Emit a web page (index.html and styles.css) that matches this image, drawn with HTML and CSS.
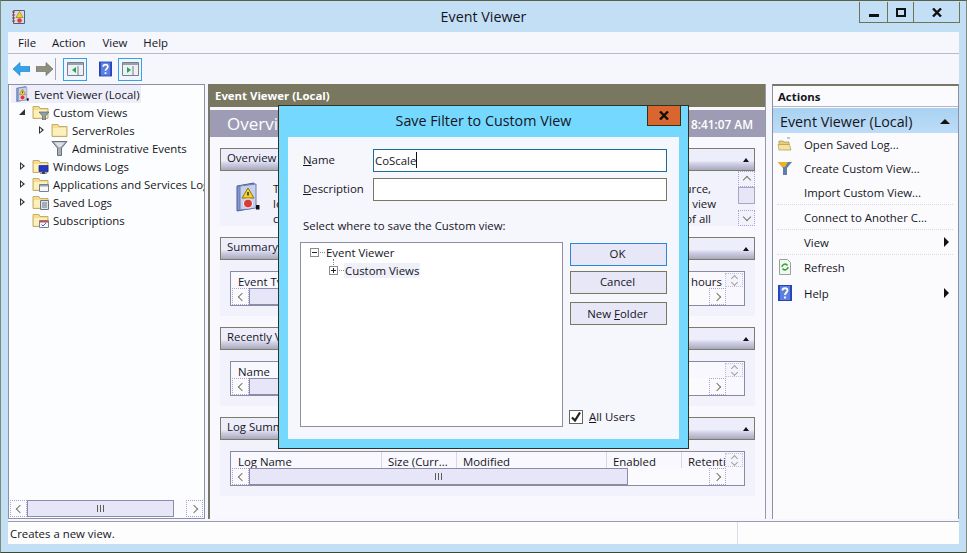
FILE: index.html
```html
<!DOCTYPE html>
<html lang="en">
<head>
    <meta charset="UTF-8">
    <meta name="viewport" content="width=device-width, initial-scale=1.0">
    <title>Event Viewer</title>
    <link rel="stylesheet" href="styles.css">
</head>
<body>
    <svg class="defs" width="0" height="0">
        <symbol id="folder" viewBox="0 0 17 16">
            <path d="M1 2.500h6l1 2h8v10H1z" fill="#f6dc8c" stroke="#c2ae72"/>
            <path d="M2 6h13v7.500H2z" fill="#fcf0bc"/>
        </symbol>
        <symbol id="folder-filter" viewBox="0 0 17 16">
            <use href="#folder" width="17" height="16"/>
            <path d="M7 8h10l-3.500 4v4h-3v-4z" fill="#8fa0ad" stroke="#56646f" stroke-width=".7"/>
        </symbol>
        <symbol id="folder-logs" viewBox="0 0 17 16">
            <use href="#folder" width="17" height="16"/>
            <path d="M7 7.500h9v6H7z" fill="#2438c8" stroke="#1a2478" stroke-width=".7"/>
            <path d="M10 14h3v1.500h2V16H8v-.5h2z" fill="#34406a"/>
        </symbol>
        <symbol id="folder-apps" viewBox="0 0 17 16">
            <use href="#folder" width="17" height="16"/>
            <path d="M7.500 8.500h9v7h-9z" fill="#f4f6fa" stroke="#78808e"/>
            <path d="M8 9h8v1.500H8z" fill="#9aa6b8"/>
        </symbol>
        <symbol id="folder-saved" viewBox="0 0 17 16">
            <use href="#folder" width="17" height="16"/>
            <path d="M8.500 6.500h8v9h-8z" fill="#dde3ea" stroke="#6a7684"/>
            <path d="M10 9h5M10 11h5M10 13h5" stroke="#6a7684"/>
        </symbol>
        <symbol id="folder-subs" viewBox="0 0 17 16">
            <use href="#folder" width="17" height="16"/>
            <path d="M7.500 8.500h9v7h-9z" fill="#f6f8fc" stroke="#7a8290"/>
            <path d="M8 9h8v1.500H8z" fill="#d8483c"/>
            <path d="M9.500 12.500l1.500 1.500 3-3" fill="none" stroke="#3a62c8"/>
        </symbol>
        <symbol id="funnel" viewBox="0 0 17 16">
            <path d="M1 1.500h15L10.500 8v7.500h-4V8z" fill="#a9b0b8" stroke="#69727c"/>
            <path d="M3.500 2.500h10L9.500 7h-2z" fill="#dfe3e8"/>
        </symbol>
        <symbol id="evlog" viewBox="0 0 26 30">
            <path d="M3 4 20 1v25L3 29z" fill="#7f96cf" stroke="#4c5f95"/>
            <path d="M6 4 22 2v24L6 28z" fill="#c5d2ee" stroke="#6c7db0"/>
            <path d="M14 6l6 10H8z" fill="#f4d228" stroke="#8a7414"/>
            <path d="M14 10v3.500" stroke="#222" stroke-width="1.400"/>
            <circle cx="14" cy="21.500" r="4.500" fill="#d93a3a" stroke="#fff"/>
            <path d="M22 23h3.500v4.500H22z" fill="#111"/>
        </symbol>
        <symbol id="applog" viewBox="0 0 14 16">
            <path d="M1.500 1.500h11v13h-11z" fill="#d7d9e8" stroke="#5a5a70"/>
            <path d="M0 3h3M0 6h3M0 9h3M0 12h3" stroke="#a03838"/>
            <path d="M7.500 2.500l3.500 6H4z" fill="#f4d228" stroke="#8a7414" stroke-width=".6"/>
            <circle cx="7.500" cy="11.500" r="2.300" fill="#d93a3a"/>
        </symbol>
        <symbol id="help" viewBox="0 0 14 16">
            <path d="M0 0h14v16H0z" fill="#2646b8"/>
            <path d="M2 1h10v14H2z" fill="#5d80e0"/>
            <path d="M4.500 5.500C4.500 2.500 9.500 2.500 9.500 5.500 9.500 7.500 7 7.500 7 10M7 11.500v2" fill="none" stroke="#fff" stroke-width="1.800"/>
        </symbol>
        <symbol id="cross" viewBox="0 0 10 9">
            <path d="M1 .5l8 8M9 .5l-8 8" stroke="#111" stroke-width="2.400"/>
        </symbol>
    </svg>

    <div class="window">
        <header class="titlebar">
            <svg class="app-icon" width="14" height="16"><use href="#applog"/></svg>
            <h1>Event Viewer</h1>
            <div class="win-controls">
                <span class="win-btn min"><i></i></span>
                <span class="win-btn max"><i></i></span>
                <span class="win-btn close"><svg width="10" height="9"><use href="#cross"/></svg></span>
            </div>
        </header>

        <div class="client">
            <nav class="menubar">
                <span>File</span>
                <span>Action</span>
                <span>View</span>
                <span>Help</span>
            </nav>

            <div class="toolbar">
                <svg width="17" height="14" viewBox="0 0 17 14"><path d="M0 7l7-6.500v4h10v5H7v4z" fill="#35a3ea" stroke="#1d78c0" stroke-width=".6"/></svg>
                <svg class="tool-fwd" width="17" height="14" viewBox="0 0 17 14"><path d="M17 7l-7-6.500v4H0v5h10v4z" fill="#8f8f80" stroke="#6a6a58" stroke-width=".6"/></svg>
                <span class="tool-sep"></span>
                <span class="tool-box">
                    <svg width="17" height="14" viewBox="0 0 17 14"><path d="M.5.5h16v13H.5z" fill="#eef0f6" stroke="#77808e"/><path d="M1 1h15v2H1z" fill="#98a0ae"/><path d="M11 4v9" stroke="#77808e"/><path d="M9 5 5 8l4 3z" fill="#22a846"/></svg>
                </span>
                <svg class="tool-help" width="13" height="16"><use href="#help"/></svg>
                <span class="tool-box">
                    <svg width="17" height="14" viewBox="0 0 17 14"><path d="M.5.5h16v13H.5z" fill="#eef0f6" stroke="#77808e"/><path d="M1 1h15v2H1z" fill="#98a0ae"/><path d="M11 4v9" stroke="#77808e"/><path d="M5 5l4 3-4 3z" fill="#22a846"/></svg>
                </span>
            </div>

            <div class="panes">
                <aside class="tree-pane">
                    <ul class="tree">
                        <li class="selected lvl0"><svg width="16" height="16"><use href="#evlog"/></svg><span>Event Viewer (Local)</span></li>
                        <li class="lvl1"><b class="tw open"></b><svg width="17" height="16"><use href="#folder-filter"/></svg><span>Custom Views</span></li>
                        <li class="lvl2"><b class="tw"></b><svg width="17" height="16"><use href="#folder"/></svg><span>ServerRoles</span></li>
                        <li class="lvl2"><b class="tw none"></b><svg width="17" height="16"><use href="#funnel"/></svg><span>Administrative Events</span></li>
                        <li class="lvl1"><b class="tw"></b><svg width="17" height="16"><use href="#folder-logs"/></svg><span>Windows Logs</span></li>
                        <li class="lvl1"><b class="tw"></b><svg width="17" height="16"><use href="#folder-apps"/></svg><span>Applications and Services Logs</span></li>
                        <li class="lvl1"><b class="tw"></b><svg width="17" height="16"><use href="#folder-saved"/></svg><span>Saved Logs</span></li>
                        <li class="lvl1"><b class="tw none"></b><svg width="17" height="16"><use href="#folder-subs"/></svg><span>Subscriptions</span></li>
                    </ul>
                    <div class="hscroll tree-scroll">
                        <span class="sb-btn left"></span>
                        <span class="sb-thumb thumb-tree"><i></i></span>
                        <span class="sb-rest"></span>
                        <span class="sb-btn right"></span>
                    </div>
                </aside>

                <main class="center-pane">
                    <div class="center-title">Event Viewer (Local)</div>
                    <div class="overview-band">
                        <span class="band-title">Overview and Summary</span>
                        <span class="band-time">5 8:41:07 AM</span>
                    </div>

                    <section class="group">
                        <div class="group-head"><span>Overview</span><em class="caret"></em></div>
                        <div class="group-body overview-body">
                            <svg class="overview-icon" width="26" height="30"><use href="#evlog"/></svg>
                            <div class="overview-text">
                                <p><span>To view events</span><span>source,</span></p>
                                <p class="long"><span>log, or custom</span><span>view</span></p>
                                <p><span>contains all</span><span>of all</span></p>
                            </div>
                            <div class="vscroll">
                                <span class="sb-btn up"></span>
                                <span class="sb-vthumb"></span>
                                <span class="sb-fill"></span>
                                <span class="sb-btn down"></span>
                            </div>
                        </div>
                    </section>

                    <section class="group">
                        <div class="group-head"><span>Summary of Administrative Events</span><em class="caret"></em></div>
                        <div class="group-body table-body">
                            <div class="grid">
                                <div class="grid-head">
                                    <span class="col-name">Event Type</span>
                                    <span class="col-hours">hours</span>
                                    <span class="spin"></span>
                                </div>
                                <div class="hscroll">
                                    <span class="sb-btn left"></span>
                                    <span class="sb-thumb thumb-wide"><i></i></span>
                                    <span class="sb-rest"></span>
                                    <span class="sb-btn right"></span>
                                </div>
                            </div>
                        </div>
                    </section>

                    <section class="group">
                        <div class="group-head"><span>Recently Viewed Nodes</span><em class="caret"></em></div>
                        <div class="group-body table-body">
                            <div class="grid">
                                <div class="grid-head">
                                    <span class="col-name">Name</span>
                                    <span class="spin"></span>
                                </div>
                                <div class="hscroll">
                                    <span class="sb-btn left"></span>
                                    <span class="sb-thumb thumb-wide"><i></i></span>
                                    <span class="sb-rest"></span>
                                    <span class="sb-btn right"></span>
                                </div>
                            </div>
                        </div>
                    </section>

                    <section class="group">
                        <div class="group-head"><span>Log Summary</span><em class="caret"></em></div>
                        <div class="group-body table-body">
                            <div class="grid">
                                <div class="grid-head">
                                    <span class="col col-log">Log Name</span>
                                    <span class="col col-size">Size (Curr...</span>
                                    <span class="col col-mod">Modified</span>
                                    <span class="col col-en">Enabled</span>
                                    <span class="col col-ret">Retenti</span>
                                    <span class="spin"></span>
                                </div>
                                <div class="hscroll">
                                    <span class="sb-btn left"></span>
                                    <span class="sb-thumb thumb-log"><i></i></span>
                                    <span class="sb-rest"></span>
                                    <span class="sb-btn right"></span>
                                </div>
                            </div>
                        </div>
                    </section>
                </main>

                <aside class="actions-pane">
                    <div class="actions-title">Actions</div>
                    <div class="actions-head"><span>Event Viewer (Local)</span><em class="caret large"></em></div>
                    <ul class="actions">
                        <li>
                            <svg width="16" height="16" viewBox="0 0 16 16"><path d="M2 5h4l1 1h5v3H2z" fill="#e8cc80" stroke="#a89250" stroke-width=".7"/><path d="M1 8.500h11.500L14 14H2z" fill="#f6e29c" stroke="#b09a58" stroke-width=".7"/><path d="M10 2h3" stroke="#5cb85c"/></svg>
                            <span>Open Saved Log...</span>
                        </li>
                        <li>
                            <svg width="16" height="16" viewBox="0 0 16 16"><path d="M1 2h14L10 8v7H6V8z" fill="#5d7fa8"/><path d="M1 2h10L8 7H5z" fill="#f2b21c"/></svg>
                            <span>Create Custom View...</span>
                        </li>
                        <li class="dashed"><i class="no-icon"></i><span>Import Custom View...</span></li>
                        <li class="dashed"><i class="no-icon"></i><span>Connect to Another C...</span></li>
                        <li class="dashed"><i class="no-icon"></i><span>View</span><em class="submenu"></em></li>
                        <li class="dashed">
                            <svg width="16" height="16" viewBox="0 0 16 16"><path d="M2.500.500h8l3 3v12h-11z" fill="#f4f6f4" stroke="#9aa0a0"/><path d="M5 8a3 3 0 0 1 5.500-1.500M11 8a3 3 0 0 1-5.500 1.500" fill="none" stroke="#38a838" stroke-width="1.600"/></svg>
                            <span>Refresh</span>
                        </li>
                        <li class="help-row">
                            <svg width="13" height="16"><use href="#help"/></svg>
                            <span>Help</span><em class="submenu"></em>
                        </li>
                    </ul>
                </aside>
            </div>

            <footer class="statusbar">
                <span class="status-text">Creates a new view.</span>
                <span class="status-cell"></span>
            </footer>
        </div>

        <div class="dialog">
            <div class="dialog-title">
                <span>Save Filter to Custom View</span>
                <span class="dialog-close"><svg width="10" height="9"><use href="#cross"/></svg></span>
            </div>
            <div class="dialog-body">
                <div class="field">
                    <label><u>N</u>ame</label>
                    <div class="input focused">CoScale<i class="cursor"></i></div>
                </div>
                <div class="field">
                    <label><u>D</u>escription</label>
                    <div class="input"></div>
                </div>
                <p class="select-label">Select where to save the Custom view:</p>
                <div class="dialog-lower">
                    <div class="view-tree">
                        <div class="vt-row"><b class="box minus"></b><i class="dots"></i><span>Event Viewer</span></div>
                        <div class="vt-row child"><b class="box plus"></b><i class="dots"></i><span class="vt-selected">Custom Views</span></div>
                    </div>
                    <div class="dialog-side">
                        <button class="btn default">OK</button>
                        <button class="btn">Cancel</button>
                        <button class="btn folder">New <u>F</u>older</button>
                        <div class="all-users">
                            <span class="checkbox">
                                <svg width="10" height="10" viewBox="0 0 10 10"><path d="M1 5.500l3 3 5-8" fill="none" stroke="#222" stroke-width="2.200"/></svg>
                            </span>
                            <span><u>A</u>ll Users</span>
                        </div>
                    </div>
                </div>
            </div>
        </div>
    </div>
</body>
</html>
```

FILE: styles.css
```css
* {
    box-sizing: border-box;
}
html, body {
    margin: 0;
    padding: 0;
    height: 100%;
    overflow: hidden;
}
body {
    font-family: "Open Sans", "Noto Sans", sans-serif;
    font-size: 11.4px;
    color: #15151c;
    background: #c3dff6;
}
.defs {
    position: absolute;
}
ul {
    list-style: none;
    margin: 0;
    padding: 0;
}
p {
    margin: 0;
}
.window {
    position: relative;
    width: 967px;
    height: 553px;
    display: flex;
    flex-direction: column;
    background-color: #c3dff6;
    background-image: radial-gradient(#a6cbe8 .6px, transparent .7px);
    background-size: 4px 4px;
    border: 1px solid #7c8a78;
    border-top-color: #5b6148;
    border-bottom-color: #3d4a33;
}

/* title bar */
.titlebar {
    position: relative;
    height: 31px;
    flex: none;
}
.app-icon {
    position: absolute;
    left: 11px;
    top: 8px;
}
.titlebar h1 {
    margin: 0;
    padding-top: 6px;
    text-align: center;
    font-size: 14.3px;
    font-weight: 400;
    line-height: 20px;
}
.win-controls {
    position: absolute;
    right: 6px;
    top: 1px;
    display: flex;
    height: 21px;
    border: 1px solid #6f7355;
    border-top: 0;
}
.win-btn {
    display: flex;
    align-items: center;
    justify-content: center;
    border-left: 1px solid #6f7355;
}
.win-btn.min {
    width: 27px;
    border-left: 0;
}
.win-btn.max {
    width: 26px;
}
.win-btn.close {
    width: 46px;
}
.min i {
    width: 10px;
    height: 3px;
    margin-top: 6px;
    background: #111;
}
.max i {
    width: 10px;
    height: 9px;
    border: 2px solid #111;
}

.client {
    flex: 1;
    margin: 0 7px 8px;
    display: flex;
    flex-direction: column;
    background: #f6f6fd;
    min-height: 0;
}
.menubar {
    height: 22px;
    flex: none;
    display: flex;
    align-items: center;
    gap: 16px;
    padding-left: 10px;
    border-bottom: 1px solid #b9b9cc;
}
.menubar span:nth-child(2) {
    margin-right: 1px;
}
.toolbar {
    height: 30px;
    flex: none;
    display: flex;
    align-items: center;
    padding-left: 5px;
}
.tool-fwd {
    margin-left: 6px;
}
.tool-sep {
    width: 1px;
    height: 22px;
    margin: 0 7px 0 2px;
    background: #a8a8b4;
}
.tool-box {
    width: 24px;
    height: 23px;
    display: flex;
    align-items: center;
    justify-content: center;
    border: 1px solid #37a0ea;
    background: #eef5fd;
}
.tool-help {
    margin: 0 6px 0 12px;
}

.panes {
    flex: 1;
    display: flex;
    min-height: 0;
}

/* left tree */
.tree-pane {
    width: 197px;
    flex: none;
    display: flex;
    flex-direction: column;
    margin-right: 3px;
    background: #fcfdfe;
    border: 1px solid #8e8ea4;
    overflow: hidden;
}
.tree {
    flex: 1;
    padding: 0 2px;
    white-space: nowrap;
}
.tree li {
    height: 18px;
    display: flex;
    align-items: center;
}
.tree svg {
    flex: none;
    margin-right: 4px;
}
.tree .lvl0 {
    padding-left: 3px;
}
.tree .lvl1 {
    padding-left: 8px;
}
.tree .lvl2 {
    padding-left: 27px;
}
.tree .selected {
    width: 130px;
    background: #eeeefa;
}
.tw {
    width: 13px;
    height: 9px;
    flex: none;
    position: relative;
}
.tw::before {
    content: "";
    position: absolute;
    left: 1px;
    top: 0;
    border-left: 5px solid #333;
    border-top: 4.500px solid transparent;
    border-bottom: 4.500px solid transparent;
}
.tw::after {
    content: "";
    position: absolute;
    left: 2px;
    top: 2px;
    border-left: 2.500px solid #fffef0;
    border-top: 2.500px solid transparent;
    border-bottom: 2.500px solid transparent;
}
.tw.open::before {
    left: 0;
    top: 1px;
    border: 0;
    width: 0;
    height: 0;
    border-right: 6px solid #333;
    border-top: 6px solid transparent;
}
.tw.open::after, .tw.none::before, .tw.none::after {
    display: none;
}

/* scrollbars */
.hscroll {
    display: flex;
    height: 17px;
    flex: none;
    background: #fbfbfe;
}
.tree-scroll {
    margin: 0 1px 1px;
}
.sb-btn {
    width: 17px;
    flex: none;
    display: flex;
    align-items: center;
    justify-content: center;
    border: 1px dotted #a9a2d8;
}
.sb-btn::before {
    content: "";
    width: 5px;
    height: 5px;
    border-left: 1.500px solid #77776a;
    border-top: 1.500px solid #77776a;
}
.sb-btn.left::before {
    transform: translateX(1px) rotate(-45deg);
}
.sb-btn.right::before {
    transform: translateX(-1px) rotate(135deg);
}
.sb-btn.up::before {
    transform: translateY(1px) rotate(45deg);
}
.sb-btn.down::before {
    transform: translateY(-1px) rotate(225deg);
}
.sb-thumb {
    display: flex;
    align-items: center;
    justify-content: center;
    background: #e6e6f8;
    border: 1px solid #8c8ca8;
}
/* three grip lines in the middle of a thumb */
.sb-thumb i {
    width: 7px;
    height: 7px;
    background: repeating-linear-gradient(90deg, #5d5d55 0 1px, transparent 1px 3px);
}
.sb-rest {
    flex: 1;
}
.thumb-tree {
    width: 147px;
}
.thumb-wide {
    width: 300px;
}
.thumb-log {
    width: 379px;
}

/* center pane */
.center-pane {
    position: relative;
    flex: 1;
    min-width: 0;
    margin-right: 6px;
    padding-bottom: 16px;
    border-left: 2px solid #77776a;
    border-right: 1px solid #9898aa;
    background: #f8f8fe;
    overflow: hidden;
}
.center-title {
    height: 23px;
    padding-left: 5px;
    line-height: 23px;
    font-weight: 700;
    color: #fff;
    background: #79775f;
}
.overview-band {
    height: 27px;
    margin: 3px 0 11px;
    padding: 0 12px 0 17px;
    display: flex;
    align-items: center;
    justify-content: space-between;
    color: #fff;
    background: #9d9cb4;
}
.band-title {
    font-size: 17px;
}
.band-time {
    font-size: 11.800px;
    font-weight: 600;
}
.group {
    margin: 0 10px 11px 10px;
}
.group-head {
    height: 23px;
    display: flex;
    align-items: center;
    justify-content: space-between;
    padding: 0 5px 5px 6px;
    border: 1px solid #7c7c68;
    background: linear-gradient(#ededfb 55%, #cfcfe6 70%, #a9a9bd);
}
.caret {
    width: 0;
    height: 0;
    border-left: 3px solid transparent;
    border-right: 3px solid transparent;
    border-bottom: 4px solid #111;
    margin-top: 5px;
}
.caret.large {
    margin-top: 0;
    border-left-width: 5px;
    border-right-width: 5px;
    border-bottom-width: 5px;
}
.group-body {
    background: #f2f2fc;
}
.overview-body {
    height: 55px;
    display: flex;
}
.overview-icon {
    margin: 11px 0 0 14px;
}
.overview-text {
    flex: 1;
    margin: 10px 22px 0 13px;
    line-height: 15px;
    white-space: nowrap;
}
.overview-text p {
    display: flex;
    justify-content: space-between;
    padding-right: 5px;
}
.overview-text p.long {
    padding-right: 0;
}
.vscroll {
    width: 17px;
    flex: none;
    display: flex;
    flex-direction: column;
}
.vscroll .sb-btn {
    height: 16px;
}
.sb-vthumb {
    height: 17px;
    background: #e6e6f8;
    border: 1px solid #a8a8bc;
}
.sb-fill {
    flex: 1;
}
.table-body {
    padding: 11px 10px 10px 10px;
}
.grid {
    height: 35px;
    display: flex;
    flex-direction: column;
    padding: 0 1px 1px;
    border: 1px solid #8a8aa0;
    background: #f8f8fe;
}
.grid .hscroll {
    width: 494px;
}
.grid-head {
    position: relative;
    height: 16px;
    flex: none;
    display: flex;
    overflow: hidden;
    line-height: 20px;
}
.col-name {
    padding-left: 6px;
}
.col-hours {
    position: absolute;
    left: 459px;
}
.spin {
    position: absolute;
    right: 0;
    top: 1px;
    width: 18px;
    height: 14px;
    border: 1px dotted #c0bce4;
    background: #f4f4fd;
}
.spin::before, .spin::after {
    content: "";
    position: absolute;
    left: 6px;
    width: 4px;
    height: 4px;
    border-left: 1px solid #a0a096;
    border-top: 1px solid #a0a096;
}
.spin::before {
    top: 2px;
    transform: rotate(45deg);
}
.spin::after {
    top: 6px;
    transform: rotate(225deg);
}
.col {
    flex: none;
    height: 16px;
    padding-left: 6px;
    border-right: 1px solid #d8d8e4;
    white-space: nowrap;
}
.col-log {
    width: 150px;
}
.col-size {
    width: 75px;
}
.col-mod {
    width: 150px;
}
.col-en {
    width: 75px;
}
.col-ret {
    width: 45px;
    overflow: hidden;
    border-right: 0;
}

/* actions pane */
.actions-pane {
    width: 187px;
    flex: none;
    border: 1px solid #8e8ea4;
    border-top: 2px solid #77776a;
    border-bottom: 0;
    background: #fbfbfe;
}
.actions-title {
    height: 21px;
    padding-left: 5px;
    line-height: 21px;
    font-weight: 700;
    border-bottom: 1px solid #b4b4c4;
}
.actions-head {
    height: 25px;
    margin-top: 1px;
    display: flex;
    align-items: center;
    justify-content: space-between;
    padding: 2px 8px 0 7px;
    font-size: 14.300px;
    background: linear-gradient(#a8d2f0, #bddcf8);
}
.actions {
    margin-top: -1px;
}
.actions li {
    height: 24px;
    display: flex;
    align-items: center;
    padding-left: 4px;
}
.actions li svg, .no-icon {
    width: 16px;
    flex: none;
    margin-right: 11px;
}
.actions li.dashed {
    height: 25px;
    border-top: 1px dotted #d8d8e6;
    margin: 0 5px 0 4px;
    padding-left: 0;
}
.actions li:nth-child(3) {
    height: 24px;
    border-top: 0;
}
.actions .help-row {
    height: 26px;
    padding-top: 2px;
}
.submenu {
    margin-left: auto;
    margin-right: 4px;
    width: 0;
    height: 0;
    border-left: 5px solid #111;
    border-top: 5px solid transparent;
    border-bottom: 5px solid transparent;
}
.help-row .submenu {
    margin-right: 9px;
}

/* status bar */
.statusbar {
    height: 23px;
    flex: none;
    display: flex;
    margin-top: 2px;
    border-top: 1px solid #9c9cb0;
    background: #fdfdfe;
}
.status-text {
    flex: 1;
    padding-left: 2px;
    line-height: 23px;
}
.status-cell {
    width: 222px;
    border-left: 1px solid #dcdce8;
}

/* dialog */
.dialog {
    position: absolute;
    left: 277px;
    top: 104px;
    width: 411px;
    height: 344px;
    padding: 0 9px 9px;
    display: flex;
    flex-direction: column;
    background-color: #74d8ff;
    border: 1px solid #30331f;
}
.dialog-title {
    height: 31px;
    flex: none;
    text-align: center;
    font-size: 14.300px;
    line-height: 30px;
}
.dialog-close {
    position: absolute;
    right: 7px;
    top: -1px;
    width: 34px;
    height: 21px;
    display: flex;
    align-items: center;
    justify-content: center;
    border: 1px solid #30331f;
    background: #d9662e;
}
.dialog-body {
    flex: 1;
    padding: 12px;
    display: flex;
    flex-direction: column;
    background: #f6f6fd;
}
.field {
    display: flex;
    align-items: center;
    margin-bottom: 6px;
}
.field label {
    width: 73px;
    padding: 0 0 2px 3px;
    flex: none;
}
.input {
    flex: 1;
    height: 23px;
    padding-left: 1px;
    line-height: 21px;
    border: 1px solid #7a7860;
    background: #fff;
}
.input.focused {
    border-color: #1d6d9c;
}
.cursor {
    display: inline-block;
    width: 1px;
    height: 16px;
    vertical-align: -3px;
    background: #111;
}
.select-label {
    margin: 11px 0 0 3px;
    line-height: 16px;
}
.dialog-lower {
    flex: 1;
    display: flex;
    margin-top: 8px;
    min-height: 0;
}
.view-tree {
    width: 263px;
    flex: none;
    padding-left: 9px;
    background: #fff;
    border: 1px solid #8e8ea0;
}
.vt-row {
    height: 18px;
    display: flex;
    align-items: center;
}
.vt-row.child {
    position: relative;
    padding-left: 19px;
}
.vt-row.child::before {
    content: "";
    position: absolute;
    left: 23px;
    top: -2px;
    height: 6px;
    border-left: 1px dotted #888;
}
.box {
    position: relative;
    width: 9px;
    height: 9px;
    flex: none;
    border: 1px solid #8a8a90;
}
.box::before {
    content: "";
    position: absolute;
    left: 1px;
    top: 3px;
    width: 5px;
    height: 1px;
    background: #222;
}
.box.plus::after {
    content: "";
    position: absolute;
    left: 3px;
    top: 1px;
    width: 1px;
    height: 5px;
    background: #222;
}
.dots {
    width: 5px;
    height: 1px;
    margin: 0 1px;
    border-top: 1px dotted #888;
}
.vt-selected {
    margin-left: -1px;
    padding: 0 1px;
    background: #f0f0fa;
}
.dialog-side {
    flex: 1;
    display: flex;
    flex-direction: column;
    margin-left: 7px;
}
.btn {
    height: 23px;
    margin: 1px 0 4px;
    padding: 0 2px 2px 0;
    font: inherit;
    color: inherit;
    border: 1px solid #7a7860;
    background: #e7e7f8;
}
.btn.default {
    border-color: #2b88d8;
}
.btn.folder {
    margin-top: 4px;
    padding-bottom: 0;
}
.all-users {
    margin-top: auto;
    margin-bottom: 3px;
    margin-left: -1px;
    display: flex;
    align-items: center;
    gap: 6px;
}
.checkbox {
    width: 14px;
    height: 14px;
    display: flex;
    align-items: center;
    justify-content: center;
    border: 1px solid #66665a;
    background: #fff;
}
```
